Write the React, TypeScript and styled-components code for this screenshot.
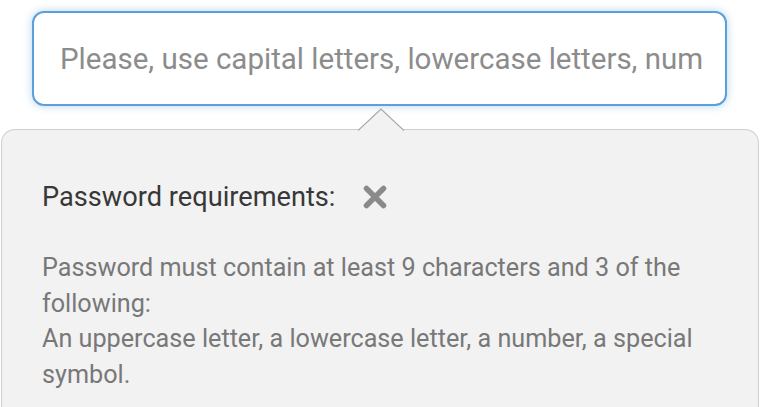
import React from "react";
import styled, { createGlobalStyle } from "styled-components";

const Global = createGlobalStyle`
  html, body { margin: 0; padding: 0; background: #ffffff; }
  body { font-family: Roboto, "Noto Sans", sans-serif; overflow: hidden; }
  * { box-sizing: border-box; }
`;

const Page = styled.div`
  width: 760px;
  height: 407px;
  display: flex;
  flex-direction: column;
  padding-top: 11px;
`;

const InputRow = styled.div`
  display: flex;
  padding-left: 32px;
`;

const Field = styled.input`
  width: 695px;
  height: 95px;
  border: 2px solid #5d9fd8;
  border-radius: 12px;
  box-shadow: 0 0 8px rgba(93, 159, 216, 0.45);
  padding: 0 22px 0 26px;
  font-family: Roboto, sans-serif;
  font-size: 29.5px;
  color: #333;
  background: #fff;
  outline: none;
  &::placeholder { color: #8c8c8c; }
`;

const Popover = styled.div`
  position: relative;
  margin-top: 23px;
  margin-left: 1px;
  width: 758px;
  flex: 1;
  background: #f2f2f2;
  border: 1px solid #cfcfcf;
  border-bottom: none;
  border-radius: 14px 14px 0 0;
  padding: 45px 40px 0 40px;
`;

const Arrow = styled.div`
  position: absolute;
  top: -22px;
  left: 356px;
  width: 46px;
  height: 22px;
  svg { display: block; }
`;

const TitleRow = styled.div`
  display: flex;
  align-items: center;
  gap: 27px;
`;

const Title = styled.div`
  font-size: 27.2px;
  color: #383838;
  line-height: 44px;
`;

const Close = styled.button`
  border: none;
  background: none;
  padding: 0;
  width: 26px;
  height: 26px;
  display: flex;
  align-items: center;
  justify-content: center;
  cursor: pointer;
`;

const Body = styled.p`
  margin: 31px 0 0 0;
  font-size: 25.2px;
  line-height: 35.5px;
  color: #787878;
`;

export default function App() {
  return (
    <>
      <Global />
      <Page>
        <InputRow>
          <Field
            type="password"
            placeholder="Please, use capital letters, lowercase letters, numbers and special symbols"
          />
        </InputRow>
        <Popover>
          <Arrow>
            <svg width="46" height="23" viewBox="0 0 46 23">
              <path d="M0 22.5 L23 1 L46 22.5" fill="#f2f2f2" stroke="#a8a8a8" strokeWidth="1.2" />
            </svg>
          </Arrow>
          <TitleRow>
            <Title>Password requirements:</Title>
            <Close aria-label="Close">
              <svg width="26" height="26" viewBox="0 0 26 26">
                <path d="M4.5 4.5 L21.5 21.5 M21.5 4.5 L4.5 21.5" stroke="#8a8a8a" strokeWidth="5.5" strokeLinecap="round" />
              </svg>
            </Close>
          </TitleRow>
          <Body>
            Password must contain at least 9 characters and 3 of the following:
            <br />
            An uppercase letter, a lowercase letter, a number, a special symbol.
          </Body>
        </Popover>
      </Page>
    </>
  );
}
